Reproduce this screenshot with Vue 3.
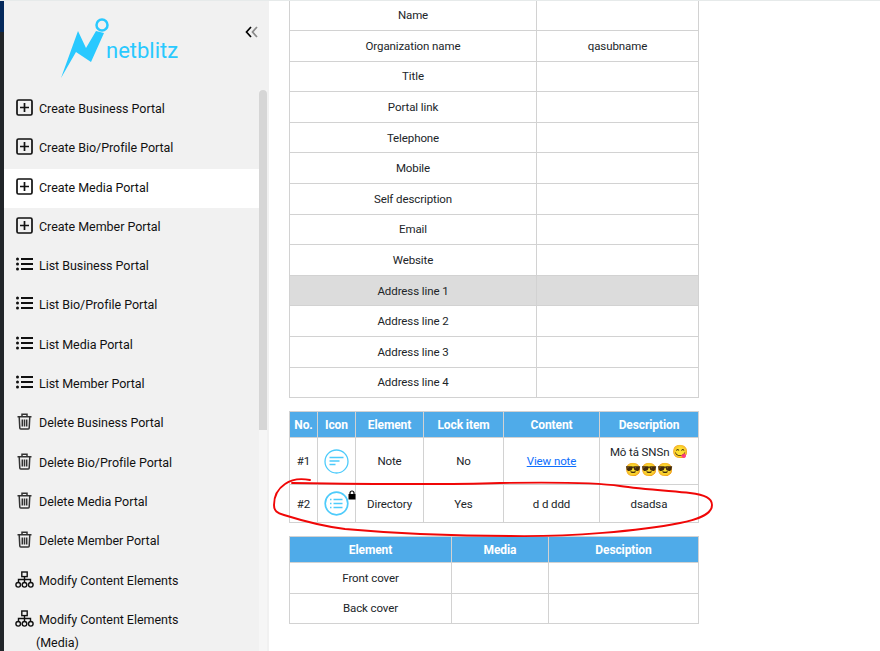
<script setup>
const group = (verb, icon, active) =>
  ['Business', 'Bio/Profile', 'Media', 'Member'].map((k) => ({
    label: `${verb} ${k} Portal`,
    icon,
    active: active === k,
  }))

const menu = [
  ...group('Create', 'plus', 'Media'),
  ...group('List', 'list'),
  ...group('Delete', 'trash'),
  { label: 'Modify Content Elements', icon: 'tree' },
  { label: 'Modify Content Elements', sub: '(Media)', icon: 'tree' },
]

const fields = [
  ['Name', ''],
  ['Organization name', 'qasubname'],
  ['Title', ''],
  ['Portal link', ''],
  ['Telephone', ''],
  ['Mobile', ''],
  ['Self description', ''],
  ['Email', ''],
  ['Website', ''],
  ['Address line 1', '', true],
  ['Address line 2', ''],
  ['Address line 3', ''],
  ['Address line 4', ''],
]
</script>

<template>
  <div class="page">
    <div class="strip"></div>
    <aside class="side">
      <div class="brand">
        <svg class="bolt" width="60" height="66" viewBox="0 0 60 66">
          <path d="M5 64 L22 17 L30 34 L40 17 L48 19 L35 48 L20 38 Z" fill="#29c9ff" />
          <circle cx="46" cy="11" r="5.500" fill="#f1f1f1" stroke="#29c9ff" stroke-width="2.500" />
        </svg>
        <span class="word">netblitz</span>
        <svg class="collapse" width="14" height="12" viewBox="0 0 14 12" fill="none" stroke-width="1.700">
          <path d="M6 1 L1.500 6 L6 11" stroke="#000" />
          <path d="M12 1 L7.500 6 L12 11" stroke="#8a8a8a" />
        </svg>
      </div>
      <div class="nav-wrap">
        <ul class="menu">
          <li v-for="(m, i) in menu" :key="i" class="item" :class="{ active: m.active }">
            <svg v-if="m.icon === 'plus'" class="ico" width="17" height="17" viewBox="0 0 17 17" fill="none" stroke="#111">
              <rect x="1" y="1" width="15" height="15" rx="1.500" stroke-width="1.700" />
              <path d="M8.500 4v9M4 8.500h9" stroke-width="1.700" />
            </svg>
            <svg v-else-if="m.icon === 'list'" class="ico" width="17" height="17" viewBox="0 0 17 17">
              <path d="M5 3h12M5 8h12M5 13h12" stroke="#111" stroke-width="2" />
              <circle cx="1.500" cy="3" r="1.500" fill="#111" />
              <circle cx="1.500" cy="8" r="1.500" fill="#111" />
              <circle cx="1.500" cy="13" r="1.500" fill="#111" />
            </svg>
            <svg v-else-if="m.icon === 'trash'" class="ico" width="17" height="17" viewBox="0 0 17 17" fill="none" stroke="#333" stroke-width="1.500">
              <path d="M1.500 3.700h14M6 3.700V1.200h5v2.500M3.200 3.700l.6 11.300a1 1 0 0 0 1 1h7.400a1 1 0 0 0 1-1l.6-11.300" />
              <path d="M6.300 6.500v7M8.500 6.500v7M10.700 6.500v7" />
            </svg>
            <svg v-else class="ico tree" width="19" height="17" viewBox="0 0 19 17" fill="none" stroke="#111" stroke-width="1.400">
              <rect x="6.800" y="1" width="5.400" height="4.600" />
              <path d="M9.500 5.600v4M3.500 11.500V8.500h12v3M9.500 8.500v3" />
              <circle cx="3.200" cy="13.800" r="2.300" />
              <circle cx="9.500" cy="13.800" r="2.300" />
              <circle cx="15.800" cy="13.800" r="2.300" />
            </svg>
            <span>{{ m.label }}</span>
            <span v-if="m.sub" class="sub">{{ m.sub }}</span>
          </li>
        </ul>
        <div class="scroll"><div class="thumb"></div></div>
      </div>
    </aside>
    <main class="main">
      <table class="tbl fields">
        <colgroup>
          <col class="c-field" />
          <col />
        </colgroup>
        <tbody>
          <tr v-for="f in fields" :key="f[0]" :class="{ hl: f[2] }">
            <td>{{ f[0] }}</td>
            <td>{{ f[1] }}</td>
          </tr>
        </tbody>
      </table>

      <table class="tbl elements">
        <colgroup>
          <col class="c1" /><col class="c2" /><col class="c3" /><col class="c4" /><col class="c5" /><col />
        </colgroup>
        <thead>
          <tr>
            <th>No.</th><th>Icon</th><th>Element</th><th>Lock item</th><th>Content</th><th>Description</th>
          </tr>
        </thead>
        <tbody>
          <tr class="r1">
            <td>#1</td>
            <td>
              <svg class="round" width="25" height="25" viewBox="0 0 25 25" fill="none" stroke="#4dcbfb">
                <circle cx="12.500" cy="12.500" r="11.500" stroke-width="1.300" />
                <path d="M5.500 8.500h14M5.500 12h10M5.500 15.500h6" stroke-width="1.300" />
              </svg>
            </td>
            <td>Note</td>
            <td>No</td>
            <td><a class="link">View note</a></td>
            <td class="emo">Mô tả SNSn <span class="glyph">😋</span><br /><span class="glyph">😎</span><span class="glyph">😎</span><span class="glyph">😎</span></td>
          </tr>
          <tr class="r2">
            <td>#2</td>
            <td class="icon-cell">
              <svg class="round" width="25" height="25" viewBox="0 0 25 25" fill="none" stroke="#4dcbfb">
                <circle cx="12.500" cy="12.500" r="11.300" stroke-width="1.700" />
                <path d="M9.500 8.500h9M9.500 12.500h9M9.500 16.500h9" stroke-width="1.500" />
                <path d="M6 8.500h1.500M6 12.500h1.500M6 16.500h1.500" stroke-width="1.500" />
              </svg>
              <svg class="lock" width="8" height="10" viewBox="0 0 8 10">
                <path d="M2 4.500V3a2 2 0 0 1 4 0v1.500" fill="none" stroke="#000" stroke-width="1.200" />
                <rect x="0.500" y="4" width="7" height="5.500" fill="#000" />
              </svg>
            </td>
            <td>Directory</td>
            <td>Yes</td>
            <td>d d ddd</td>
            <td>dsadsa</td>
          </tr>
        </tbody>
      </table>

      <table class="tbl covers">
        <colgroup>
          <col class="d1" /><col class="d2" /><col />
        </colgroup>
        <thead>
          <tr><th>Element</th><th>Media</th><th>Desciption</th></tr>
        </thead>
        <tbody>
          <tr><td>Front cover</td><td></td><td></td></tr>
          <tr><td>Back cover</td><td></td><td></td></tr>
        </tbody>
      </table>
    </main>

    <svg class="ink" width="880" height="651" viewBox="0 0 880 651" fill="none">
      <path
        d="M310 480 C300 478 292 479 285 484 C276 490 274 498 274 505 C274 511 277 513 284 515 C300 520 320 526 345 529 C400 534 450 536 510 536 C570 537 640 531 680 523 C700 519 712 514 712 505 C712 498 705 495 690 493 C670 491 640 489 620 486 C600 483 560 482 500 483 C440 485 360 484 292 483"
        stroke="#f00707"
        stroke-width="1.900"
        stroke-linecap="round"
      />
    </svg>
  </div>
</template>

<style scoped>
.page {
  position: relative;
  display: flex;
  width: 880px;
  height: 651px;
  overflow: hidden;
  box-sizing: border-box;
  border-top: 1px solid #e6eaea;
  background: #fff;
  font-family: Roboto, "Open Sans", sans-serif;
  font-size: 12px;
  color: #212529;
}
.strip {
  flex: none;
  width: 4px;
  background: linear-gradient(#04295c 0 31px, #212529 31px);
}
.side {
  flex: none;
  width: 265px;
  display: flex;
  flex-direction: column;
  background: #f1f1f1;
}
.brand {
  position: relative;
  flex: none;
  height: 88px;
}
.bolt {
  position: absolute;
  left: 52px;
  top: 13px;
}
.word {
  position: absolute;
  left: 102px;
  top: 35px;
  font-size: 22px;
  line-height: 30px;
  color: #29c9ff;
}
.collapse {
  position: absolute;
  left: 241px;
  top: 25px;
}
.nav-wrap {
  flex: 1;
  display: flex;
  min-height: 0;
}
.menu {
  flex: none;
  width: 255px;
  margin: 0;
  padding: 1px 0 0;
  list-style: none;
  color: #111;
}
.item {
  height: 39.300px;
  padding-left: 12px;
  box-sizing: border-box;
  font-size: 12.500px;
  letter-spacing: -0.040px;
  line-height: 37px;
  white-space: nowrap;
}
.item.active {
  background: #fff;
}
.ico {
  display: inline-block;
  vertical-align: -3px;
  margin-right: 6px;
}
.ico.tree {
  margin-right: 5px;
  margin-left: -1px;
}
.sub {
  display: block;
  margin: -5px 0 0 20px;
  line-height: 20px;
}
.scroll {
  flex: none;
  width: 8px;
  margin-top: 1px;
  background: #f6f6f6;
}
.thumb {
  height: 340px;
  background: #d6d6d6;
  border-radius: 4px 4px 0 0;
}
.main {
  flex: 1;
  padding-left: 20px;
}
.tbl {
  width: 410px;
  table-layout: fixed;
  border-collapse: collapse;
  text-align: center;
  font-size: 11.500px;
  letter-spacing: -0.100px;
}
.tbl td,
.tbl th {
  border: 1px solid #d2d2d2;
  padding: 0;
}
.tbl th {
  height: 25px;
  background: #4fabe9;
  color: #fff;
  font-size: 12px;
  font-weight: 700;
}
.fields {
  border-top: hidden;
  margin-top: -1px;
}
.fields tr {
  height: 30.600px;
}
.hl td {
  background: #dcdcdc;
}
.c-field {
  width: 247px;
}
.elements {
  margin-top: 13px;
}
.c1 { width: 28px; }
.c2 { width: 38px; }
.c3 { width: 68px; }
.c4 { width: 80px; }
.c5 { width: 96px; }
.r1 {
  height: 47px;
}
.r2 {
  height: 38px;
}
.round {
  display: block;
  margin: 0 auto;
}
.icon-cell {
  position: relative;
}
.lock {
  position: absolute;
  right: -1px;
  top: 5px;
}
.link {
  color: #0d6efd;
  text-decoration: underline;
}
.emo {
  line-height: 17px;
}
.glyph {
  font-size: 13px;
}
.covers {
  margin-top: 13px;
}
.d1 { width: 162px; }
.d2 { width: 97px; }
.covers tbody tr {
  height: 30.500px;
}
.ink {
  position: absolute;
  left: 0;
  top: -1px;
  pointer-events: none;
}
</style>
